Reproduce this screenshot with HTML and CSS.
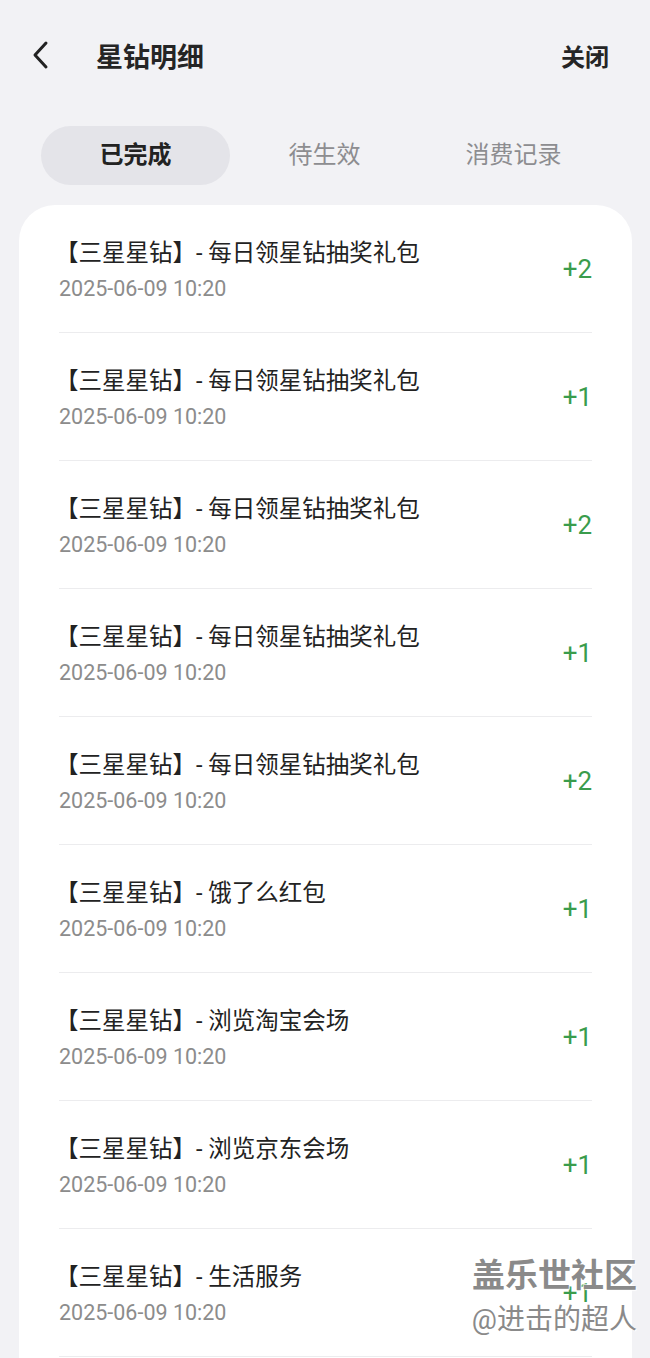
FILE: index.html
```html
<!DOCTYPE html>
<html lang="zh-CN">
<head>
    <meta charset="UTF-8">
    <meta name="viewport" content="width=device-width, initial-scale=1.0">
    <title>星钻明细</title>
    <link rel="stylesheet" href="styles.css">
</head>
<body>
    <!-- 顶部栏 -->
    <header class="top-bar">
        <a href="#" class="back-button" title="返回">
            <svg width="20" height="30" viewBox="0 0 20 30"><path d="M16 3 L5 15 L16 27" fill="none" stroke="#222" stroke-width="3" stroke-linecap="round" stroke-linejoin="round"/></svg>
        </a>
        <h1 class="page-title">星钻明细</h1>
        <a href="#" class="close-link">关闭</a>
    </header>

    <!-- 标签 -->
    <nav class="tabs">
        <span class="tab active">已完成</span>
        <span class="tab">待生效</span>
        <span class="tab">消费记录</span>
    </nav>

    <div class="record-card">
        <div class="record-row">
            <div class="record-info">
                <div class="record-title">【三星星钻】- 每日领星钻抽奖礼包</div>
                <div class="record-date">2025-06-09 10:20</div>
            </div>
            <span class="record-amount">+2</span>
        </div>
        <div class="record-row">
            <div class="record-info">
                <div class="record-title">【三星星钻】- 每日领星钻抽奖礼包</div>
                <div class="record-date">2025-06-09 10:20</div>
            </div>
            <span class="record-amount">+1</span>
        </div>
        <div class="record-row">
            <div class="record-info">
                <div class="record-title">【三星星钻】- 每日领星钻抽奖礼包</div>
                <div class="record-date">2025-06-09 10:20</div>
            </div>
            <span class="record-amount">+2</span>
        </div>
        <div class="record-row">
            <div class="record-info">
                <div class="record-title">【三星星钻】- 每日领星钻抽奖礼包</div>
                <div class="record-date">2025-06-09 10:20</div>
            </div>
            <span class="record-amount">+1</span>
        </div>
        <div class="record-row">
            <div class="record-info">
                <div class="record-title">【三星星钻】- 每日领星钻抽奖礼包</div>
                <div class="record-date">2025-06-09 10:20</div>
            </div>
            <span class="record-amount">+2</span>
        </div>
        <div class="record-row">
            <div class="record-info">
                <div class="record-title">【三星星钻】- 饿了么红包</div>
                <div class="record-date">2025-06-09 10:20</div>
            </div>
            <span class="record-amount">+1</span>
        </div>
        <div class="record-row">
            <div class="record-info">
                <div class="record-title">【三星星钻】- 浏览淘宝会场</div>
                <div class="record-date">2025-06-09 10:20</div>
            </div>
            <span class="record-amount">+1</span>
        </div>
        <div class="record-row">
            <div class="record-info">
                <div class="record-title">【三星星钻】- 浏览京东会场</div>
                <div class="record-date">2025-06-09 10:20</div>
            </div>
            <span class="record-amount">+1</span>
        </div>
        <div class="record-row">
            <div class="record-info">
                <div class="record-title">【三星星钻】- 生活服务</div>
                <div class="record-date">2025-06-09 10:20</div>
            </div>
            <span class="record-amount">+1</span>
        </div>
        <div class="record-row">
            <div class="record-info">
                <div class="record-title">【三星星钻】- 生活服务</div>
                <div class="record-date">2025-06-09 10:20</div>
            </div>
            <span class="record-amount">+1</span>
        </div>
    </div>

    <!-- 水印 -->
    <div class="watermark">
        <div class="wm-big">盖乐世社区</div>
        <div class="wm-small">@进击的超人</div>
    </div>
</body>
</html>
```

FILE: styles.css
```css
body {
    font-family: 'Roboto', 'Noto Sans CJK SC', sans-serif;
    background-color: #f2f2f5;
    margin: 0;
    padding: 0;
    color: #222;
    height: 1358px;
    overflow: hidden;
    position: relative;
}

/* 顶部栏 */
.top-bar {
    display: flex;
    align-items: center;
    height: 110px;
    padding: 0 41px 0 30px;
}
.back-button {
    display: flex;
    align-items: center;
    width: 20px;
    height: 30px;
    margin-right: 46px;
}
.page-title {
    flex: 1;
    margin: 0;
    font-size: 27px;
    font-weight: bold;
    color: #252525;
}
.close-link {
    color: #252525;
    text-decoration: none;
    font-size: 24px;
    font-weight: bold;
}

/* 标签 */
.tabs {
    display: grid;
    grid-template-columns: repeat(3, 189px);
    margin: 16px 0 0 41px;
}
.tab {
    height: 59px;
    line-height: 59px;
    text-align: center;
    font-size: 24px;
    color: #8d8d90;
    border-radius: 30px;
}
.tab.active {
    background-color: #e4e4e9;
    color: #222;
    font-weight: bold;
}

/* 列表卡片 */
.record-card {
    background-color: #fff;
    margin: 20px 18px 0 19px;
    border-radius: 36px;
    padding: 0 40px;
}
.record-row {
    display: flex;
    align-items: center;
    height: 127px;
    border-bottom: 1px solid #ececee;
}
.record-info {
    flex: 1;
    padding-top: 5px;
}
.record-title {
    font-size: 23.5px;
    line-height: 36px;
    color: #222;
    margin-left: -4px;
}
.record-date {
    font-size: 21.5px;
    line-height: 36px;
    color: #8c8c8c;
}
.record-amount {
    font-size: 26px;
    color: #3a9c4c;
}

/* 水印 */
.watermark {
    position: absolute;
    right: 13px;
    top: 1253px;
    text-align: right;
    color: #8a8a8a;
    text-shadow: 1px 1px 1px #fff, -1px -1px 1px rgba(255, 255, 255, 0.8);
}
.wm-big {
    font-size: 33px;
    font-weight: bold;
    line-height: 46px;
}
.wm-small {
    font-size: 28px;
    line-height: 42px;
}
```
